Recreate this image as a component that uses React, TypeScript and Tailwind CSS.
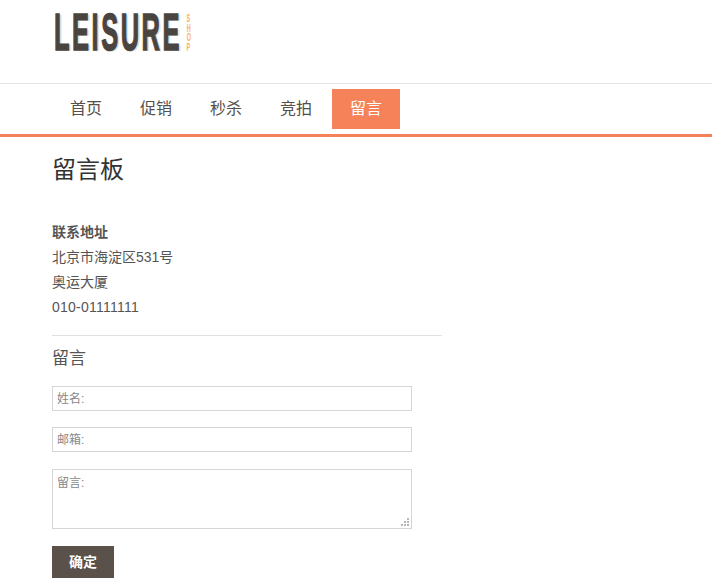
const links = ["首页", "促销", "秒杀", "竞拍", "留言"];

const fontStack = "font-['Liberation_Sans','Noto_Sans_CJK_SC',sans-serif]";

function Logo() {
  return (
    <div className="flex h-[83px] items-start pl-[54px] pt-[14px]">
      <div className="h-[38px] w-[132px]">
        <div className="origin-top-left scale-x-[0.5] text-[51px] leading-[37px] font-bold tracking-[5px] whitespace-nowrap text-[#4a4440] [-webkit-text-stroke:1.4px_#4a4440] [text-shadow:4px_1px_0_#e4e2e0]">
          LEISURE
        </div>
      </div>
      <div className="flex w-[5px] flex-col items-center text-[10px] leading-[9.7px] font-bold text-[#fcae62]">
        <span className="scale-x-[0.55]">S</span>
        <span className="scale-x-[0.55]">H</span>
        <span className="scale-x-[0.55]">O</span>
        <span className="scale-x-[0.55]">P</span>
      </div>
    </div>
  );
}

function Nav() {
  return (
    <nav className="flex h-[54px] gap-[2px] border-t border-b-[3px] border-t-[#e5e5e5] border-b-[#f58258] px-[52px] pt-[5px]">
      {links.map((link, i) => (
        <a
          key={link}
          href="#"
          className={`flex h-[40px] w-[68px] items-center justify-center text-[16px] ${i === 4 ? "bg-[#f58258] text-white" : "text-[#55504c]"}`}
        >
          {link}
        </a>
      ))}
    </nav>
  );
}

// dotted grip in the textarea corner
function Grip() {
  const dots = [
    [6, 0],
    [3, 3],
    [6, 3],
    [0, 6],
    [3, 6],
    [6, 6],
  ];
  return (
    <svg className="pointer-events-none absolute right-[3px] bottom-[3px]" width="8" height="8" viewBox="0 0 8 8">
      {dots.map(([x, y]) => (
        <rect key={`${x}-${y}`} x={x} y={y} width="2" height="2" fill="#b5b5b5" />
      ))}
    </svg>
  );
}

export default function App() {
  return (
    <div className={`h-[586px] overflow-hidden bg-white ${fontStack}`}>
      <Logo />
      <Nav />
      <main className="px-[52px] pt-[16px]">
        <h1 className="text-[24px] leading-[34px] text-[#333]">留言板</h1>
        <div className="mt-[33px] w-[390px] border-b border-[#e0e0e0] pb-[15px] text-[14px] leading-[25px] text-[#555]">
          <p className="font-bold">联系地址</p>
          <p>北京市海淀区531号</p>
          <p>奥运大厦</p>
          <p className="tracking-[0.25px]">010-01111111</p>
        </div>
        <h2 className="mt-[11px] mb-[-1px] text-[17px] leading-[24px] text-[#555]">留言</h2>
        <form className="mt-[16px] flex w-[360px] flex-col">
          <input
            placeholder="姓名:"
            className="h-[25px] border border-[#d6d6d6] px-[4px] text-[12px] placeholder:text-[#888]"
          />
          <input
            placeholder="邮箱:"
            className="mt-[16px] h-[25px] border border-[#d6d6d6] px-[4px] text-[12px] placeholder:text-[#888]"
          />
          <div className="relative mt-[17px] h-[60px]">
            <textarea
              placeholder="留言:"
              className="h-full w-full resize-none border border-[#d6d6d6] px-[4px] py-[4px] text-[12px] placeholder:text-[#888]"
            />
            <Grip />
          </div>
          <button
            type="button"
            className="mt-[17px] h-[32px] w-[62px] bg-[#5a514b] text-[14px] font-bold text-white"
          >
            确定
          </button>
        </form>
      </main>
    </div>
  );
}
